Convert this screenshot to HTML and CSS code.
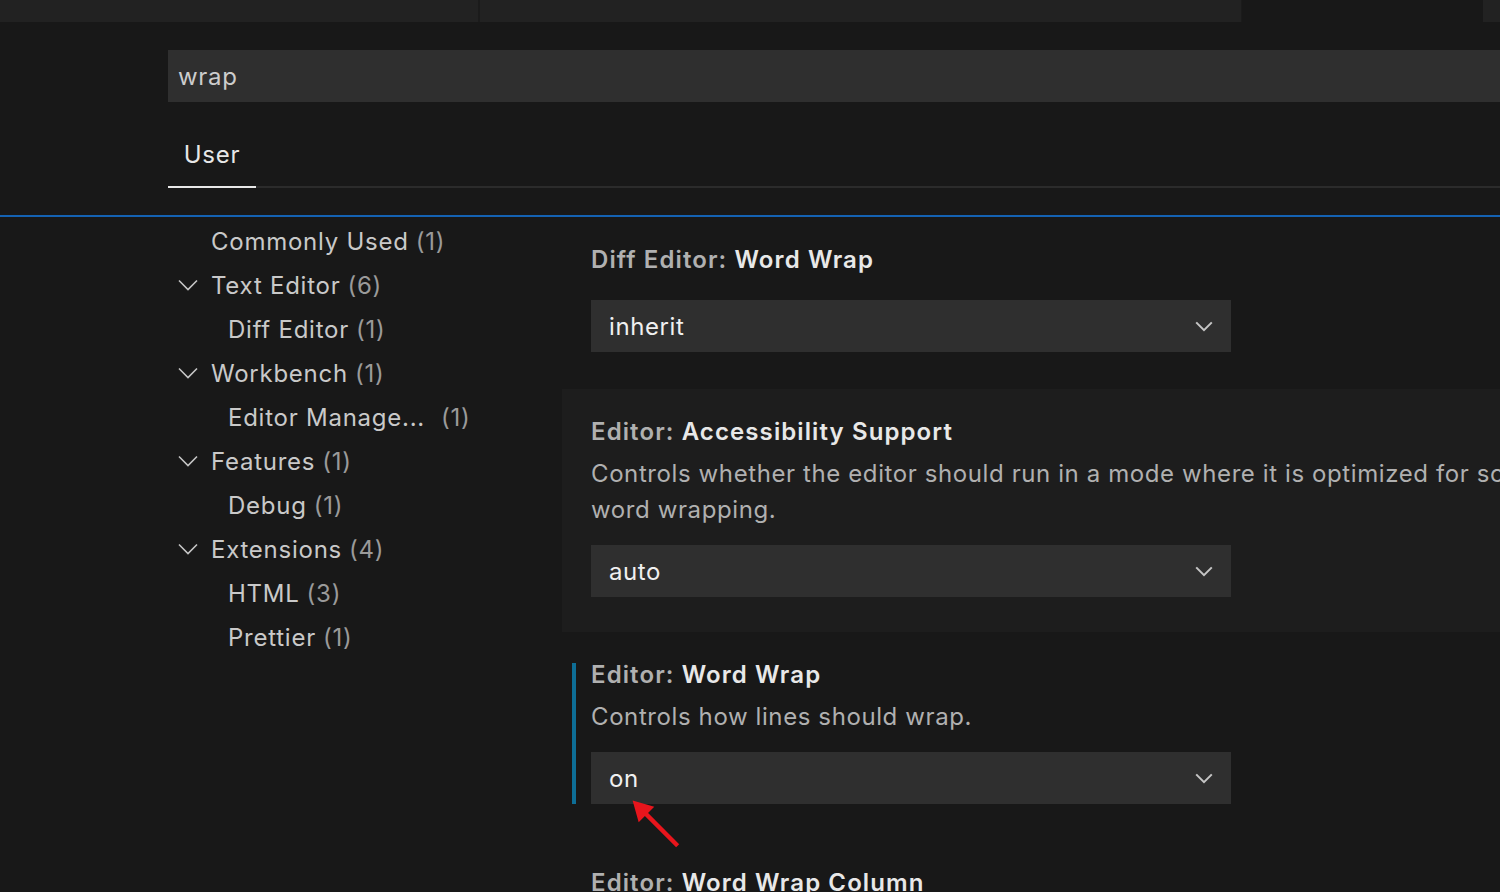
FILE: index.html
```html
<!DOCTYPE html>
<html>
<head>
<meta charset="utf-8">
<link rel="stylesheet" href="styles.css">
</head>
<body>
<div class="tabbar">
  <div class="tab t1"></div>
  <div class="tab t2"></div>
  <div class="tab active"></div>
  <div class="tab rest"></div>
</div>
<div class="header">
  <div class="search">wrap</div>
  <div class="scopes">
    <div class="scope active">User</div>
    <div class="scope-line"></div>
  </div>
</div>
<div class="divider"></div>
<div class="main">
  <nav class="toc">
    <div class="row l1"><span class="chev-space"></span><span class="name">Commonly Used</span><span class="count">(1)</span></div>
    <div class="row l1"><svg class="chev" viewBox="0 0 20 12"><path d="M1 1.5 L10 10.5 L19 1.5"/></svg><span class="name">Text Editor</span><span class="count">(6)</span></div>
    <div class="row l2"><span class="name">Diff Editor</span><span class="count">(1)</span></div>
    <div class="row l1"><svg class="chev" viewBox="0 0 20 12"><path d="M1 1.5 L10 10.5 L19 1.5"/></svg><span class="name">Workbench</span><span class="count">(1)</span></div>
    <div class="row l2"><span class="name">Editor Manage...</span><span class="count gap">(1)</span></div>
    <div class="row l1"><svg class="chev" viewBox="0 0 20 12"><path d="M1 1.5 L10 10.5 L19 1.5"/></svg><span class="name">Features</span><span class="count">(1)</span></div>
    <div class="row l2"><span class="name">Debug</span><span class="count">(1)</span></div>
    <div class="row l1"><svg class="chev" viewBox="0 0 20 12"><path d="M1 1.5 L10 10.5 L19 1.5"/></svg><span class="name">Extensions</span><span class="count">(4)</span></div>
    <div class="row l2"><span class="name">HTML</span><span class="count">(3)</span></div>
    <div class="row l2"><span class="name">Prettier</span><span class="count">(1)</span></div>
  </nav>
  <section class="settings">
    <div class="item first">
      <div class="title"><span class="cat">Diff Editor: </span><span class="key">Word Wrap</span></div>
      <div class="select"><span>inherit</span><svg class="schev" viewBox="0 0 20 12"><path d="M1.5 1.5 L10 10 L18.5 1.5"/></svg></div>
    </div>
    <div class="item hover">
      <div class="title"><span class="cat">Editor: </span><span class="key">Accessibility Support</span></div>
      <div class="desc">Controls whether the editor should run in a mode where it is optimized for screen readers. Setting to on will disable word wrapping.</div>
      <div class="select"><span>auto</span><svg class="schev" viewBox="0 0 20 12"><path d="M1.5 1.5 L10 10 L18.5 1.5"/></svg></div>
    </div>
    <div class="item focused">
      <div class="title"><span class="cat">Editor: </span><span class="key">Word Wrap</span></div>
      <div class="desc">Controls how lines should wrap.</div>
      <div class="select"><span>on</span><svg class="schev" viewBox="0 0 20 12"><path d="M1.5 1.5 L10 10 L18.5 1.5"/></svg></div>
      <svg class="arrow" viewBox="0 0 60 60"><path class="shaft" d="M55 55 L14 14"/><path class="head" d="M3 3 L28 10 L10 28 Z"/></svg>
    </div>
    <div class="item">
      <div class="title"><span class="cat">Editor: </span><span class="key">Word Wrap Column</span></div>
    </div>
  </section>
</div>
</body>
</html>
```
FILE: styles.css
```css
html, body {
  margin: 0;
  padding: 0;
  background: #181818;
  height: 100%;
  overflow: hidden;
}
body {
  font-family: Inter, "Noto Sans", sans-serif;
  color: #cccccc;
}
.tabbar {
  display: flex;
  height: 22px;
  background: #222222;
}
.tab { height: 22px; background: #222222; }
.t1 { width: 478px; border-right: 2px solid #1b1b1b; }
.t2 { width: 761px; border-right: 1px solid #1b1b1b; }
.tab.active { width: 241px; background: #181818; }
.tab.rest { flex: 1; }

.header {
  padding: 28px 0 0 168px;
}
.search {
  height: 52px;
  box-sizing: border-box;
  padding-top: 2px;
  background: #2f2f2f;
  color: #cccccc;
  font-size: 24px;
  line-height: 50px;
  padding-left: 10px;
  letter-spacing: 0.7px;
}
.scopes {
  display: flex;
  align-items: flex-end;
  height: 86px;
}
.scope {
  width: 88px;
  text-align: center;
  font-size: 24px;
  color: #e7e7e7;
  line-height: 30px;
  padding-bottom: 16px;
  border-bottom: 2px solid #e7e7e7;
  box-sizing: border-box;
  letter-spacing: 0.7px;
}
.scope-line {
  flex: 1;
  height: 2px;
  background: #2b2b2b;
}
.divider {
  margin-top: 27px;
  height: 2px;
  background: #1462b3;
}
.main {
  display: flex;
}
.toc {
  width: 394px;
  padding: 2px 0 0 168px;
  box-sizing: content-box;
  flex: none;
}
.row {
  display: flex;
  align-items: center;
  height: 44px;
  font-size: 24px;
  white-space: nowrap;
  letter-spacing: 0.75px;
}
.row .name { color: #c9c9c9; }
.row .count { color: #9a9a9a; margin-left: 7px; }
.row .count.gap { margin-left: 16px; }
.l1 { padding-left: 10px; }
.l2 { padding-left: 60px; }
.chev, .chev-space {
  width: 20px;
  height: 12px;
  margin-right: 13px;
  flex: none;
}
.chev path, .schev path {
  fill: none;
  stroke: #c5c5c5;
  stroke-width: 1.6;
}
.settings {
  flex: 1;
  min-width: 0;
  padding-top: 1px;
}
.item {
  position: relative;
  padding: 26px 0 36px 29px;
}
.item.first {
  padding-top: 25px;
  padding-bottom: 37px;
}
.item.hover {
  background: #1d1d1d;
  padding-bottom: 35px;
}
.item.focused::before {
  content: "";
  position: absolute;
  left: 10px;
  top: 31px;
  bottom: 36px;
  width: 4px;
  background: #0e6e96;
}
.title {
  font-size: 24px;
  line-height: 34px;
  height: 34px;
  font-weight: 600;
  white-space: nowrap;
  letter-spacing: 1.1px;
}
.title .cat { color: #b0b0b0; }
.title .key { color: #e8e8e8; }
.desc {
  margin-top: 7px;
  font-size: 24px;
  line-height: 36px;
  color: #b0b0b0;
  white-space: normal;
  width: 1420px;
  letter-spacing: 0.6px;
}
.select {
  margin-top: 23px;
  width: 640px;
  height: 52px;
  background: #2f2f2f;
  display: flex;
  align-items: center;
  justify-content: space-between;
  padding: 0 17px 0 18px;
  box-sizing: border-box;
  font-size: 24px;
  color: #f0f0f0;
  letter-spacing: 0.6px;
}
.desc + .select { margin-top: 17px; }
.schev {
  width: 20px;
  height: 11px;
}
.schev path { stroke-width: 2.2; }
.arrow {
  position: absolute;
  left: 68px;
  top: 166px;
  width: 52px;
  height: 52px;
}
.arrow .shaft { stroke: #e8151c; stroke-width: 5; fill: none; }
.arrow .head { fill: #e8151c; }
```
